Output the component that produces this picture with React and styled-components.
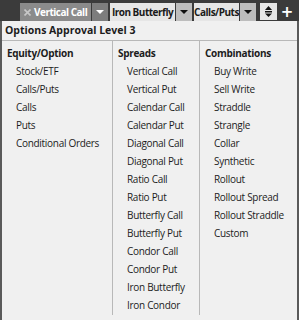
import React from "react";
import styled, { createGlobalStyle } from "styled-components";

const GlobalStyle = createGlobalStyle`
  html, body {
    margin: 0;
    padding: 0;
    background: #3b3b3b;
  }
  body {
    font-family: "Open Sans", "Liberation Sans", sans-serif;
    font-size: 10px;
    letter-spacing: -0.3px;
    color: #1c1c1c;
  }
`;

const columns = [
  {
    title: "Equity/Option",
    width: 110,
    items: ["Stock/ETF", "Calls/Puts", "Calls", "Puts", "Conditional Orders"],
  },
  {
    title: "Spreads",
    width: 87,
    items: [
      "Vertical Call",
      "Vertical Put",
      "Calendar Call",
      "Calendar Put",
      "Diagonal Call",
      "Diagonal Put",
      "Ratio Call",
      "Ratio Put",
      "Butterfly Call",
      "Butterfly Put",
      "Condor Call",
      "Condor Put",
      "Iron Butterfly",
      "Iron Condor",
    ],
  },
  {
    title: "Combinations",
    width: 98,
    items: [
      "Buy Write",
      "Sell Write",
      "Straddle",
      "Strangle",
      "Collar",
      "Synthetic",
      "Rollout",
      "Rollout Spread",
      "Rollout Straddle",
      "Custom",
    ],
  },
];

const tabs = [
  { label: "Vertical Call", width: 71, active: true },
  { label: "Iron Butterfly", width: 65 },
  { label: "Calls/Puts", width: 45 },
];

function Caret({ color }) {
  return (
    <svg width="8" height="4" viewBox="0 0 8 4">
      <path d="M0 0H8L4 4Z" fill={color} />
    </svg>
  );
}

export default function App() {
  return (
    <Wrap>
      <GlobalStyle />
      <TabBar>
        {tabs.map((t) => (
          <TabGroup key={t.label}>
            <Tab $active={t.active} $width={t.width}>
              {t.active && (
                <Close>
                  <svg width="7" height="7" viewBox="0 0 7 7">
                    <path d="M0.5 0.5L6.5 6.5M6.5 0.5L0.5 6.5" stroke="#c8c8c8" strokeWidth="1.6" />
                  </svg>
                </Close>
              )}
              {t.label}
            </Tab>
            <DropBtn $active={t.active}>
              <Caret color={t.active ? "#fff" : "#111"} />
            </DropBtn>
          </TabGroup>
        ))}
        <IconBtn>
          <svg width="9" height="11" viewBox="0 0 9 11">
            <path d="M4.5 0L8 4H1Z" fill="#111" />
            <rect x="1" y="5" width="7" height="1.5" fill="#111" />
            <path d="M4.5 11L8 7.5H1Z" fill="#111" />
          </svg>
        </IconBtn>
        <Plus>+</Plus>
      </TabBar>
      <Panel>
        <Title>Options Approval Level 3</Title>
        <Columns>
          {columns.map((c) => (
            <Column key={c.title} $width={c.width}>
              <ColHead>{c.title}</ColHead>
              {c.items.map((i) => (
                <Item key={i}>{i}</Item>
              ))}
            </Column>
          ))}
        </Columns>
      </Panel>
    </Wrap>
  );
}

const Wrap = styled.div`
  width: 299px;
  height: 320px;
  display: flex;
  flex-direction: column;
  background: #3b3b3b;
  overflow: hidden;
`;

const TabBar = styled.div`
  height: 21px;
  flex-shrink: 0;
  display: flex;
  align-items: flex-end;
  padding-left: 20px;
  box-sizing: border-box;
  white-space: nowrap;
`;

const TabGroup = styled.div`
  display: flex;
  flex-shrink: 0;
  height: 18px;
  margin-right: 2px;
`;

const Tab = styled.div`
  width: ${(p) => p.$width}px;
  box-sizing: border-box;
  display: flex;
  align-items: center;
  justify-content: ${(p) => (p.$active ? "flex-start" : "center")};
  padding-left: ${(p) => (p.$active ? "4px" : "0")};
  overflow: hidden;
  font-weight: 700;
  font-size: 10px;
  letter-spacing: -0.5px;
  background: ${(p) => (p.$active ? "#8b8b8b" : "#e6e6e6")};
  color: ${(p) => (p.$active ? "#fff" : "#1a1a1a")};
  margin-right: 1px;
`;

const Close = styled.span`
  display: flex;
  margin-right: 3px;
`;

const DropBtn = styled.div`
  width: 16px;
  display: flex;
  align-items: center;
  justify-content: center;
  background: ${(p) => (p.$active ? "#7d7d7d" : "#bdbdbd")};
`;

const IconBtn = styled.div`
  width: 17px;
  height: 17px;
  flex-shrink: 0;
  margin-left: 2px;
  margin-bottom: 1px;
  background: #e6e6e6;
  display: flex;
  align-items: center;
  justify-content: center;
`;

const Plus = styled.div`
  color: #fff;
  font-weight: 700;
  font-size: 15px;
  line-height: 18px;
  width: 16px;
  margin-left: 2px;
  flex-shrink: 0;
  text-align: center;
  font-family: "DejaVu Sans", sans-serif;
`;

const Panel = styled.div`
  flex: 1;
  background: #f0f0f0;
  border-left: 2px solid #5a5a5a;
  border-right: 2px solid #5a5a5a;
  display: flex;
  flex-direction: column;
`;

const Title = styled.div`
  height: 19px;
  line-height: 19px;
  padding-left: 3px;
  font-weight: 700;
  font-size: 10.5px;
  letter-spacing: 0;
  border-bottom: 1px solid #b8b8b8;
`;

const Columns = styled.div`
  display: flex;
  flex: 1;
  padding-bottom: 5px;
`;

const Column = styled.div`
  width: ${(p) => p.$width}px;
  padding-top: 3px;
  box-sizing: border-box;
  & + & {
    border-left: 1px solid #b8b8b8;
  }
`;

const ColHead = styled.div`
  height: 18px;
  line-height: 18px;
  padding-left: 5px;
  font-weight: 700;
`;

const Item = styled.div`
  height: 18px;
  line-height: 18px;
  padding-left: 14px;
`;
